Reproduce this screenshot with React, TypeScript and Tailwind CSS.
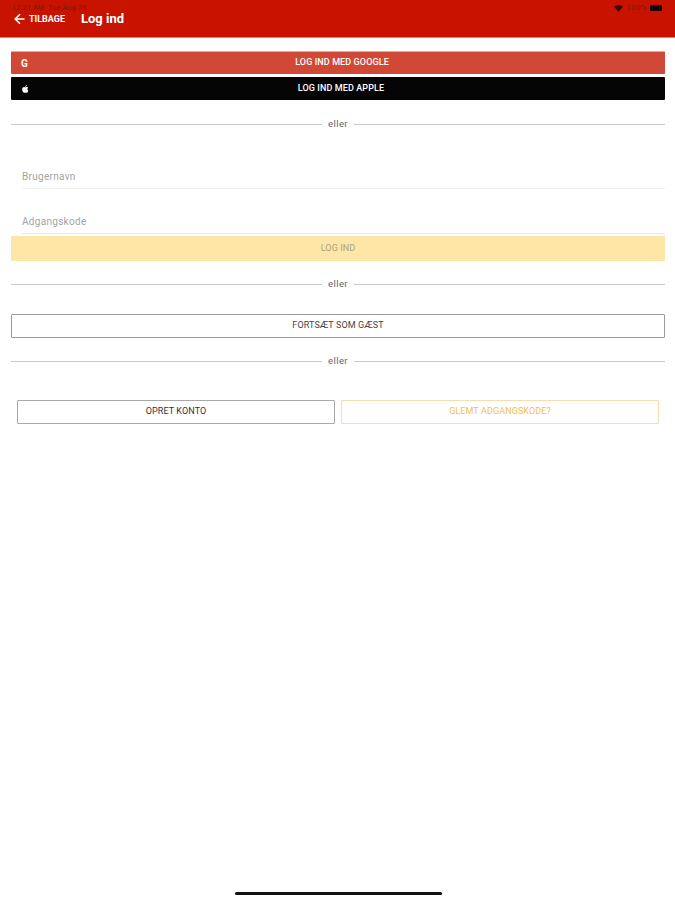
import React from "react";

const font = { fontFamily: '"Roboto", "Liberation Sans", sans-serif' };

function Divider({ className }: { className: string }) {
  return (
    <div className={`flex items-center h-3 gap-[6px] ${className}`}>
      <div className="flex-1 h-px bg-[#c9c9c9]" />
      <span className="text-[9.5px] leading-3 tracking-[0.4px] text-[#666666]">eller</span>
      <div className="flex-1 h-px bg-[#c9c9c9]" />
    </div>
  );
}

export default function App() {
  return (
    <div className="w-[675px] h-[900px] bg-white flex flex-col overflow-hidden" style={font}>
      <header className="h-[38px] bg-[#c71300] border-b border-[#e08070] relative shrink-0 flex items-start">
        <div className="absolute left-[12px] top-[4px] text-[7px] leading-[8px] text-[#7a1a10] tracking-[0.3px]">
          12:21 AM&nbsp;&nbsp;Tue Aug 29
        </div>
        <div className="absolute right-[13px] top-[4px] flex items-center gap-[3px] text-[8px] leading-[8px] tracking-[0.3px] text-[#7a1a10]">
          <svg width="9" height="7" viewBox="0 0 9 7"><path d="M0 1.6 Q4.5 -1 9 1.6 L4.5 7 Z" fill="#3a0a05" /></svg>
          <span>100%</span>
          <div className="w-[12px] h-[6px] bg-[#1a0503] rounded-[1px]" />
        </div>
        <div className="flex items-center mt-[11px] ml-[14px]">
          <svg width="11" height="12" viewBox="0 0 11 12" fill="none" stroke="#ffffff" strokeWidth="1.6">
            <path d="M10.5 6H1.5M6 1.2 1.2 6 6 10.8" />
          </svg>
          <span className="ml-[4px] text-[9px] leading-[14px] font-bold text-white">TILBAGE</span>
          <span className="ml-[16px] text-[13px] leading-[16px] font-bold text-white">Log ind</span>
        </div>
      </header>

      <main className="flex flex-col pl-[11px] pr-[10px] pt-[13px]">
        <button className="relative h-[23px] w-full pl-[8px] bg-[#d14836] rounded-[1px] border-t border-[#e9a89d] text-white text-[9px] font-medium tracking-[0.1px] flex items-center justify-center">
          <span className="absolute left-[10px] text-[10px] font-bold">G</span>
          LOG IND MED GOOGLE
        </button>
        <button className="relative mt-[3px] h-[23px] w-full pl-[6px] bg-[#050505] rounded-[1px] text-white text-[9px] font-medium tracking-[0.1px] flex items-center justify-center">
          <svg className="absolute left-[10px]" width="9" height="10" viewBox="0 0 24 24" fill="#ffffff">
            <path d="M17.05 12.54c-.03-2.6 2.12-3.85 2.22-3.91-1.21-1.77-3.09-2.01-3.76-2.04-1.6-.16-3.12.94-3.93.94-.81 0-2.06-.92-3.39-.89-1.74.03-3.35 1.01-4.25 2.57-1.81 3.14-.46 7.8 1.3 10.35.86 1.25 1.89 2.65 3.24 2.6 1.3-.05 1.79-.84 3.36-.84 1.57 0 2.01.84 3.39.81 1.4-.02 2.28-1.27 3.14-2.53.99-1.45 1.4-2.85 1.42-2.93-.03-.01-2.72-1.04-2.74-4.13zM14.47 4.9c.72-.87 1.2-2.08 1.07-3.28-1.03.04-2.28.69-3.02 1.55-.66.77-1.24 2-1.09 3.18 1.15.09 2.33-.59 3.04-1.45z" />
          </svg>
          LOG IND MED APPLE
        </button>

        <Divider className="mt-[18px]" />

        <div className="mt-[33px] h-[26px] ml-[11px] border-b border-[#f1f1f1] text-[10px] leading-[28px] tracking-[0.3px] text-[#a3a3a3]">
          Brugernavn
        </div>
        <div className="mt-[19px] h-[26px] ml-[11px] border-b border-[#e6e6e6] text-[10px] leading-[28px] tracking-[0.3px] text-[#a3a3a3]">
          Adgangskode
        </div>

        <button className="mt-[2px] h-[25px] w-full bg-[#fde6a6] text-[#a9a383] text-[9px] tracking-[0.1px] flex items-center justify-center">
          LOG IND
        </button>

        <Divider className="mt-[17px]" />

        <button className="mt-[24px] h-[24px] w-full border border-[#9a9a9a] rounded-[1px] bg-white text-[#444444] text-[9px] tracking-[0.1px] flex items-center justify-center">
          FORTSÆT SOM GÆST
        </button>

        <Divider className="mt-[17px]" />

        <div className="mt-[33px] pl-[6px] pr-[6px] flex gap-[6px]">
          <button className="flex-1 h-[24px] border border-[#a8a8a8] rounded-[1px] bg-white text-[#333333] text-[9px] tracking-[0.1px] flex items-center justify-center">
            OPRET KONTO
          </button>
          <button className="flex-1 h-[24px] border border-[#fbdcae] rounded-[1px] bg-white text-[#f2bd52] text-[9px] tracking-[0.1px] flex items-center justify-center">
            GLEMT ADGANGSKODE?
          </button>
        </div>
      </main>

      <div className="mt-auto mb-[5px] ml-[235px] w-[207px] h-[3px] rounded-full bg-[#111111]" />
    </div>
  );
}
